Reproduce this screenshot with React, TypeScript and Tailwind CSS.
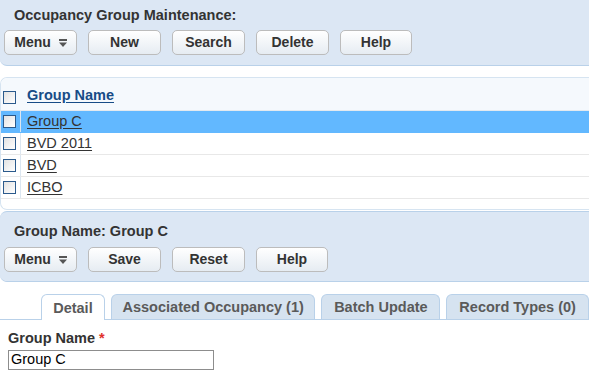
import type { ReactNode } from 'react';

function Btn({ children, w = 'w-[73px]' }: { children: ReactNode; w?: string }) {
    return (
        <button
            className={`${w} h-[25px] rounded-[5px] border border-[#bcbcbc] bg-gradient-to-b from-white to-[#e6ecf2] text-[14px] font-bold text-[#333] flex items-center justify-center gap-2`}
        >
            {children}
        </button>
    );
}

function MenuBtn() {
    return (
        <Btn>
            <span>Menu</span>
            <svg width="8" height="9" viewBox="0 0 8 9" className="mt-[1px]">
                <rect x="0" y="0" width="8" height="2" fill="#555" />
                <path d="M0 3.5h8L4 8z" fill="#555" />
            </svg>
        </Btn>
    );
}

function Check() {
    return <span className="block w-[13px] h-[13px] border border-[#2b5a8c] bg-gradient-to-br from-[#e2e2e2] to-white" />;
}

const rows = ['Group C', 'BVD 2011', 'BVD', 'ICBO'];

export default function App() {
    return (
        <div className="w-[589px] h-[375px] overflow-hidden bg-white font-['Liberation_Sans',Arial,sans-serif] text-[#333]">
            {/* top toolbar */}
            <div className="h-[66px] bg-[#dce7f4] border-b border-[#b9d1e9] rounded-bl-[7px] pt-[6px] pl-[4px]">
                <div className="pl-[10px] text-[14.5px] font-bold text-[#333] leading-[18px]">Occupancy Group Maintenance:</div>
                <div className="flex gap-[11px] mt-[6px]">
                    <MenuBtn />
                    <Btn>New</Btn>
                    <Btn>Search</Btn>
                    <Btn>Delete</Btn>
                    <Btn w="w-[72px]">Help</Btn>
                </div>
            </div>

            {/* list */}
            <div className="mt-[11px] h-[133px] border border-r-0 border-[#d6e4f1] rounded-l-[7px] overflow-hidden">
                <div className="h-[33px] bg-[#f5f9fd] flex items-center border-b border-[#e3e9ef]">
                    <div className="w-[20px] pl-[2px] pt-[6px]"><Check /></div>
                    <a className="ml-[6px] pt-[3px] text-[14.5px] font-bold text-[#174c87] underline underline-offset-2">Group Name</a>
                </div>
                {rows.map((r, i) => (
                    <div
                        key={r}
                        className={`h-[22px] flex items-center border-b ${i === 0 ? 'bg-[#62b8ff] border-[#62b8ff]' : 'border-[#e8e8e8]'}`}
                    >
                        <div className="w-[20px] h-full pl-[2px] flex items-center border-r border-[#dbe6f1]"><Check /></div>
                        <a className="ml-[6px] text-[14.5px] text-[#333] underline underline-offset-2">{r}</a>
                    </div>
                ))}
            </div>

            {/* detail toolbar */}
            <div className="mt-[1px] h-[71px] bg-[#dce7f4] border-y border-[#b9d1e9] rounded-l-[7px] pt-[10px] pl-[4px]">
                <div className="pl-[10px] text-[14.5px] font-bold text-[#333] leading-[18px]">Group Name: Group C</div>
                <div className="flex gap-[11px] mt-[7px]">
                    <MenuBtn />
                    <Btn>Save</Btn>
                    <Btn>Reset</Btn>
                    <Btn w="w-[72px]">Help</Btn>
                </div>
            </div>

            {/* tabs */}
            <div className="mt-[12px] flex items-end gap-[6px] pl-[41px] border-b border-[#b9d1e9] h-[26px]">
                <div className="w-[64px] h-[26px] -mb-px pt-[2px] bg-white border border-b-0 border-[#b9d1e9] rounded-t-[6px] flex items-center justify-center text-[14.5px] font-bold text-[#5a5a5a]">Detail</div>
                <div className="w-[205px] h-[25px] pt-[1px] bg-[#d6e3f0] border border-b-0 border-[#b9d1e9] rounded-t-[6px] flex items-center justify-center text-[14.5px] font-bold text-[#5a5a5a]">Associated Occupancy (1)</div>
                <div className="w-[119px] h-[25px] pt-[1px] bg-[#d6e3f0] border border-b-0 border-[#b9d1e9] rounded-t-[6px] flex items-center justify-center text-[14.5px] font-bold text-[#5a5a5a]">Batch Update</div>
                <div className="w-[143px] h-[25px] pt-[1px] bg-[#d6e3f0] border border-b-0 border-[#b9d1e9] rounded-t-[6px] flex items-center justify-center text-[14.5px] font-bold text-[#5a5a5a]">Record Types (0)</div>
            </div>

            {/* form */}
            <div className="pl-[8px] pt-[10px]">
                <div className="text-[14.5px] font-bold text-[#333] leading-[17px]">
                    Group Name <span className="text-[#e0322b]">*</span>
                </div>
                <input
                    readOnly
                    value="Group C"
                    className="w-[206px] h-[20px] border border-[#8d8d8d] px-[2px] text-[14.5px] text-black outline-none"
                />
            </div>
        </div>
    );
}
